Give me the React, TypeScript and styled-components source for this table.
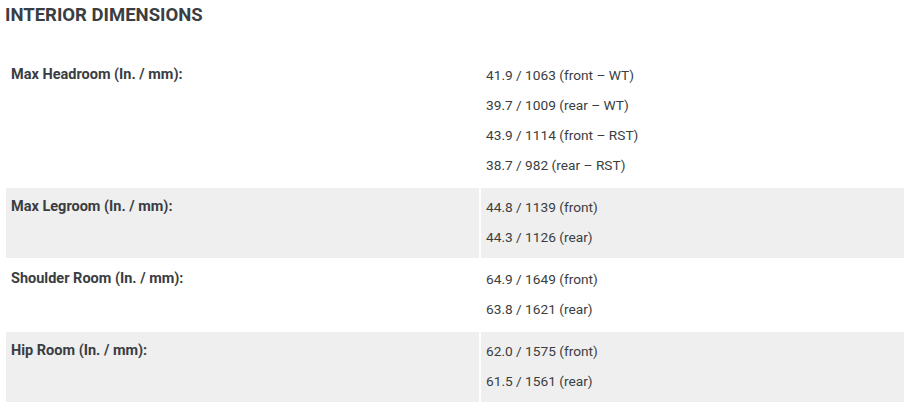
import { createGlobalStyle } from "styled-components";
import styled from "styled-components";

const GlobalStyle = createGlobalStyle`
  body {
    margin: 0;
    background: #ffffff;
    font-family: Roboto, "Liberation Sans", sans-serif;
    color: #3a3d42;
  }
`;

const Section = styled.section`
  width: 910px;
  padding: 0 4px;
  box-sizing: border-box;
`;

const Heading = styled.h2`
  margin: 0;
  padding: 4px 1px 0;
  height: 54px;
  box-sizing: border-box;
  font-size: 18.5px;
  line-height: 22px;
  font-weight: 700;
  color: #3a3d42;
`;

const Table = styled.table`
  width: 902px;
  border-collapse: separate;
  border-spacing: 2px;
`;

const Row = styled.tr<{ $shaded: boolean }>`
  background: ${(p) => (p.$shaded ? "#efefef" : "transparent")};
`;

const LabelCell = styled.td`
  width: 463px;
  vertical-align: top;
  padding: 9px 5px 1px;
  font-size: 14.5px;
  line-height: 20px;
  font-weight: 700;
`;

const ValueCell = styled.td`
  vertical-align: top;
  padding: 9px 5px 1px;
  font-size: 13.7px;
  line-height: 20px;
`;

const Value = styled.p`
  margin: 0 0 10px;
`;

const rows = [
  {
    label: "Max Headroom (In. / mm):",
    values: [
      "41.9 / 1063 (front – WT)",
      "39.7 / 1009 (rear – WT)",
      "43.9 / 1114 (front – RST)",
      "38.7 / 982 (rear – RST)",
    ],
  },
  {
    label: "Max Legroom (In. / mm):",
    values: ["44.8 / 1139 (front)", "44.3 / 1126 (rear)"],
  },
  {
    label: "Shoulder Room (In. / mm):",
    values: ["64.9 / 1649 (front)", "63.8 / 1621 (rear)"],
  },
  {
    label: "Hip Room (In. / mm):",
    values: ["62.0 / 1575 (front)", "61.5 / 1561 (rear)"],
  },
];

const App = () => {
  return (
    <>
      <GlobalStyle />
      <Section>
        <Heading>INTERIOR DIMENSIONS</Heading>
        <Table>
          <tbody>
            {rows.map((r, i) => (
              <Row key={r.label} $shaded={i % 2 === 1}>
                <LabelCell>{r.label}</LabelCell>
                <ValueCell>
                  {r.values.map((v) => (
                    <Value key={v}>{v}</Value>
                  ))}
                </ValueCell>
              </Row>
            ))}
          </tbody>
        </Table>
      </Section>
    </>
  );
};

export default App;
